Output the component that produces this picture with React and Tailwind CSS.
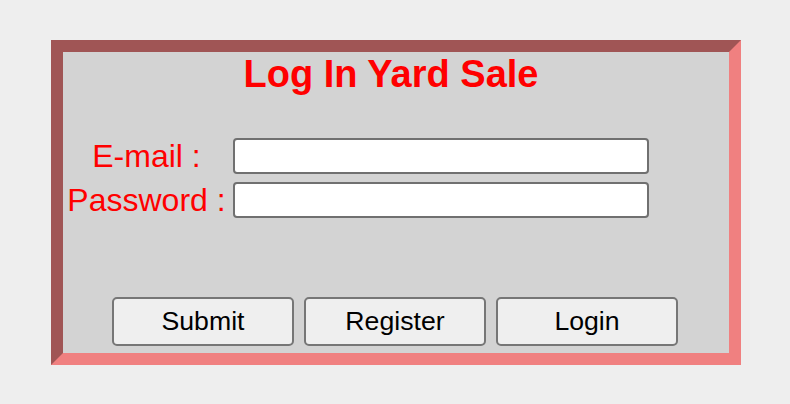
export default function App() {
  return (
    <div className="min-h-[404px] w-[790px] bg-[#eeeeee] pt-[40px] pl-[51px] font-['Liberation_Sans',Arial,sans-serif]">
      <div className="flex h-[325px] w-[690px] flex-col border-[12px] border-t-[#a05555] border-l-[#a05555] border-r-[#f08080] border-b-[#f08080] bg-[#d3d3d3]">
        <h1 className="pt-[3px] pr-[10px] text-center text-[38px] font-bold leading-none text-[#ff0000]">
          Log In Yard Sale
        </h1>
        <div className="mt-[45px] flex flex-col gap-[8px]">
          <div className="flex h-[36px] items-center">
            <label className="w-[167px] text-center text-[32px] leading-none text-[#ff0000]">E-mail :</label>
            <input type="text" className="ml-[3px] h-[36px] w-[416px] rounded-[4px] border-2 border-[#707070] bg-white outline-none" />
          </div>
          <div className="flex h-[36px] items-center">
            <label className="w-[167px] text-center text-[32px] leading-none text-[#ff0000]">Password :</label>
            <input type="password" className="ml-[3px] h-[36px] w-[416px] rounded-[4px] border-2 border-[#707070] bg-white outline-none" />
          </div>
        </div>
        <div className="mt-auto mb-[7px] flex justify-center gap-[10px] pr-[2px]">
          <button className="h-[49px] w-[182px] rounded-[5px] border-2 border-[#767676] bg-[#efefef] text-[26.67px] leading-none text-black">Submit</button>
          <button className="h-[49px] w-[182px] rounded-[5px] border-2 border-[#767676] bg-[#efefef] text-[26.67px] leading-none text-black">Register</button>
          <button className="h-[49px] w-[182px] rounded-[5px] border-2 border-[#767676] bg-[#efefef] text-[26.67px] leading-none text-black">Login</button>
        </div>
      </div>
    </div>
  );
}
